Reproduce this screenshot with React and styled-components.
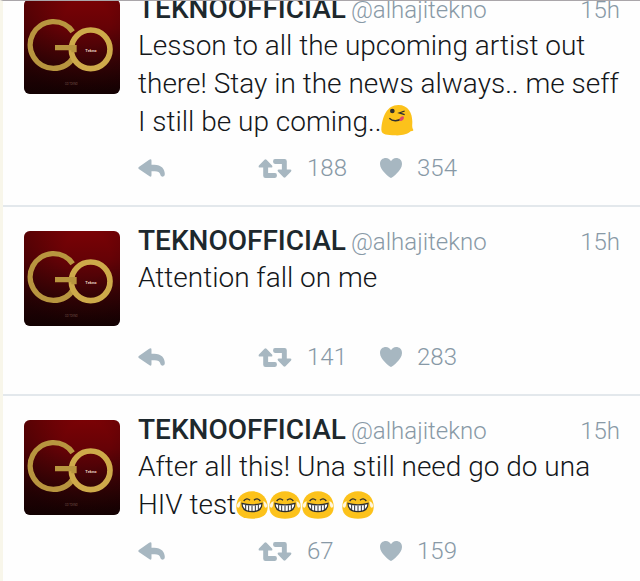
import React from "react";
import styled, { createGlobalStyle } from "styled-components";

const tweets = [
  {
    id: 1,
    text: "Lesson to all the upcoming artist out there! Stay in the news always.. me seff I still be up coming..",
    emojis: "w",
    retweets: 188,
    likes: 354,
  },
  { id: 2, text: "Attention fall on me", emojis: "", retweets: 141, likes: 283 },
  {
    id: 3,
    text: "After all this! Una still need go do una HIV test",
    emojis: "jjj j",
    retweets: 67,
    likes: 159,
  },
];

function Cover() {
  return (
    <CoverArt viewBox="0 0 288 285" preserveAspectRatio="none" aria-hidden="true">
      <defs>
        <linearGradient id="velvet" x1="0" y1="0" x2="0" y2="1">
          <stop offset="0" stopColor="#7a0205" />
          <stop offset="0.3" stopColor="#660206" />
          <stop offset="0.65" stopColor="#3e0306" />
          <stop offset="1" stopColor="#1c0203" />
        </linearGradient>
        <radialGradient id="shade" cx="0.65" cy="0.25" r="0.8">
          <stop offset="0.3" stopColor="#000" stopOpacity="0" />
          <stop offset="1" stopColor="#000" stopOpacity="0.35" />
        </radialGradient>
      </defs>
      <rect width="288" height="285" fill="url(#velvet)" />
      <rect width="288" height="285" fill="url(#shade)" />
      <path
        d="M146 98A70 70 0 1 0 88 208Q130 208 150 172"
        fill="none"
        stroke="#b8953f"
        strokeWidth="16"
      />
      <circle cx="200" cy="151" r="58" fill="none" stroke="#ceaa4a" strokeWidth="17" />
      <path d="M93 138H158V160H142V154H93Z" fill="#b8953f" />
      <text x="184" y="158" fontSize="12" fontWeight="700" fill="#e8cfc0">
        Tekno
      </text>
      <text x="123" y="259" fontSize="8" fill="#8d6a62">
        GO TEKNO
      </text>
    </CoverArt>
  );
}

function Wink() {
  return (
    <EmojiArt viewBox="0 0 99 96" $w={33} $h={32} role="img" aria-label="winking face">
      <path
        d="M1 78C3 38 18 3 52 3C82 3 94 27 94 54C94 64 92 69 97 78C97 81 93 82 90 81C80 91 62 95 42 94C20 93 2 93 1 78Z"
        fill="#fcc21b"
      />
      <circle cx="34" cy="21" r="7" fill="#2f2f2f" />
      <path d="M71 21L55 27L71 32" fill="none" stroke="#2f2f2f" strokeWidth="4" />
      <path d="M25 43C35 53 52 53 64 41" fill="none" stroke="#2f2f2f" strokeWidth="4" />
      <path d="M55 48C56 40 64 35 68 38C71 44 64 51 58 51Z" fill="#e0486a" />
    </EmojiArt>
  );
}

function Joy() {
  return (
    <EmojiArt viewBox="0 0 99 84" $w={33} $h={28} role="img" aria-label="tears of joy">
      <path
        d="M48 1C76 1 95 20 95 48C95 72 78 83 48 83C18 83 1 72 1 48C1 20 20 1 48 1Z"
        fill="#fcc21b"
      />
      <path
        d="M23 30Q32 18 42 28M54 28Q64 18 73 30"
        fill="none"
        stroke="#2f2f2f"
        strokeWidth="4"
      />
      <path
        d="M18 37Q48 46 78 37Q78 62 48 62Q18 62 18 37Z"
        fill="#fff"
        stroke="#2f2f2f"
        strokeWidth="4"
      />
      <path d="M29 42V58M38 43V61M48 44V61M58 43V61M67 42V58" stroke="#2f2f2f" strokeWidth="3" />
      <path
        d="M14 30C7 33 1 40 3 47C6 53 11 50 12 43ZM82 30C89 33 95 40 93 47C90 53 85 50 84 43Z"
        fill="#fff6dc"
      />
    </EmojiArt>
  );
}

function Tweet({ tweet }) {
  return (
    <TweetRow>
      <Cover />
      <Content>
        <Header>
          <Name href="#profile">TEKNOOFFICIAL</Name>
          <Handle href="#profile">@alhajitekno</Handle>
          <Time>15h</Time>
        </Header>
        <Message>
          {tweet.text}
          {[...tweet.emojis].map((e, i) => {
            if (e === " ") return " ";
            return e === "w" ? <Wink key={i} /> : <Joy key={i} />;
          })}
        </Message>
        <Actions>
          <Action type="button" aria-label="Reply">
            <Icon viewBox="0 0 80 54" $w={27} $h={18}>
              <path d="M2 24L33 2Q40-2 40 5V17H48C70 17 80 30 80 46Q80 53 73 53Q67 53 66 46Q64 37 50 37H40V48Q40 56 33 51L2 30Q-1 27 2 24Z" />
            </Icon>
          </Action>
          <Action type="button" aria-label="Retweet">
            <Icon viewBox="0 0 102 58" $w={34} $h={19}>
              <path d="M19 2Q22-1 25 2L42 20Q45 26 39 26H30V43H51Q57 43 57 50.500Q57 58 51 58H22Q15 58 15 51V26H5Q-1 26 2 20Z" />
              <path d="M83 56Q80 59 77 56L60 38Q57 32 63 32H72V15H51Q45 15 45 7.500Q45 0 51 0H80Q87 0 87 7V32H97Q103 32 100 38Z" />
            </Icon>
            {tweet.retweets}
          </Action>
          <Action type="button" aria-label="Like">
            <Icon viewBox="0 0 64 58" $w={22} $h={20}>
              <path d="M32 58C27 55 0 36 0 17C0 6 8 0 17 0C24 0 29 4 32 9C35 4 40 0 47 0C56 0 64 6 64 17C64 36 37 55 32 58Z" />
            </Icon>
            {tweet.likes}
          </Action>
        </Actions>
      </Content>
    </TweetRow>
  );
}

export default function App() {
  return (
    <Page>
      <GlobalStyle />
      <Feed>
        {tweets.map((tweet) => (
          <Tweet key={tweet.id} tweet={tweet} />
        ))}
      </Feed>
    </Page>
  );
}

const GlobalStyle = createGlobalStyle`
  * {
    box-sizing: border-box;
  }

  body {
    margin: 0;
    background: #fefefe;
    font-family: Roboto, "Liberation Sans", sans-serif;
    font-weight: 300;
    color: #14171a;
  }
`;

const Page = styled.main`
  height: 100vh;
  overflow: hidden;
  border-top: 1px solid #aaa6aa;
  border-left: 3px solid #f8f6ea;
`;

/* The list is scrolled a little way into the first tweet */
const Feed = styled.div`
  margin-top: -26px;
`;

const TweetRow = styled.article`
  display: flex;
  gap: 18px;
  padding: 24px 20px 23px 21px;
  border-bottom: 2px solid #e3e8ec;
`;

const CoverArt = styled.svg`
  flex: none;
  width: 96px;
  height: 95px;
  border-radius: 6px;
`;

const Content = styled.div`
  flex: 1;
  min-width: 0;
`;

const Header = styled.header`
  display: flex;
  align-items: baseline;
  gap: 5px;
  margin: -6px 0 1px;
  line-height: 32px;
`;

const Name = styled.a`
  font-size: 28px;
  font-weight: 500;
  color: #1d282d;
  text-decoration: none;
`;

const Handle = styled.a`
  font-size: 24px;
  color: #8899a6;
  text-decoration: none;
`;

const Time = styled.time`
  margin-left: auto;
  font-size: 24px;
  color: #8899a6;
`;

const Message = styled.p`
  min-height: 71px;
  margin: 0;
  font-size: 28px;
  line-height: 38px;
`;

const Actions = styled.div`
  display: grid;
  grid-template-columns: 120px 122px auto;
  align-items: center;
  height: 28px;
  margin-top: 13px;
`;

const Action = styled.button`
  display: flex;
  align-items: center;
  gap: 15px;
  padding: 0;
  border: 0;
  background: none;
  font: inherit;
  font-size: 24px;
  line-height: 28px;
  color: #8899a6;
  cursor: pointer;
`;

const Icon = styled.svg`
  flex: none;
  width: ${(p) => p.$w}px;
  height: ${(p) => p.$h}px;
  fill: #a7b7c1;
`;

const EmojiArt = styled.svg`
  width: ${(p) => p.$w}px;
  height: ${(p) => p.$h}px;
  vertical-align: -5px;
`;
